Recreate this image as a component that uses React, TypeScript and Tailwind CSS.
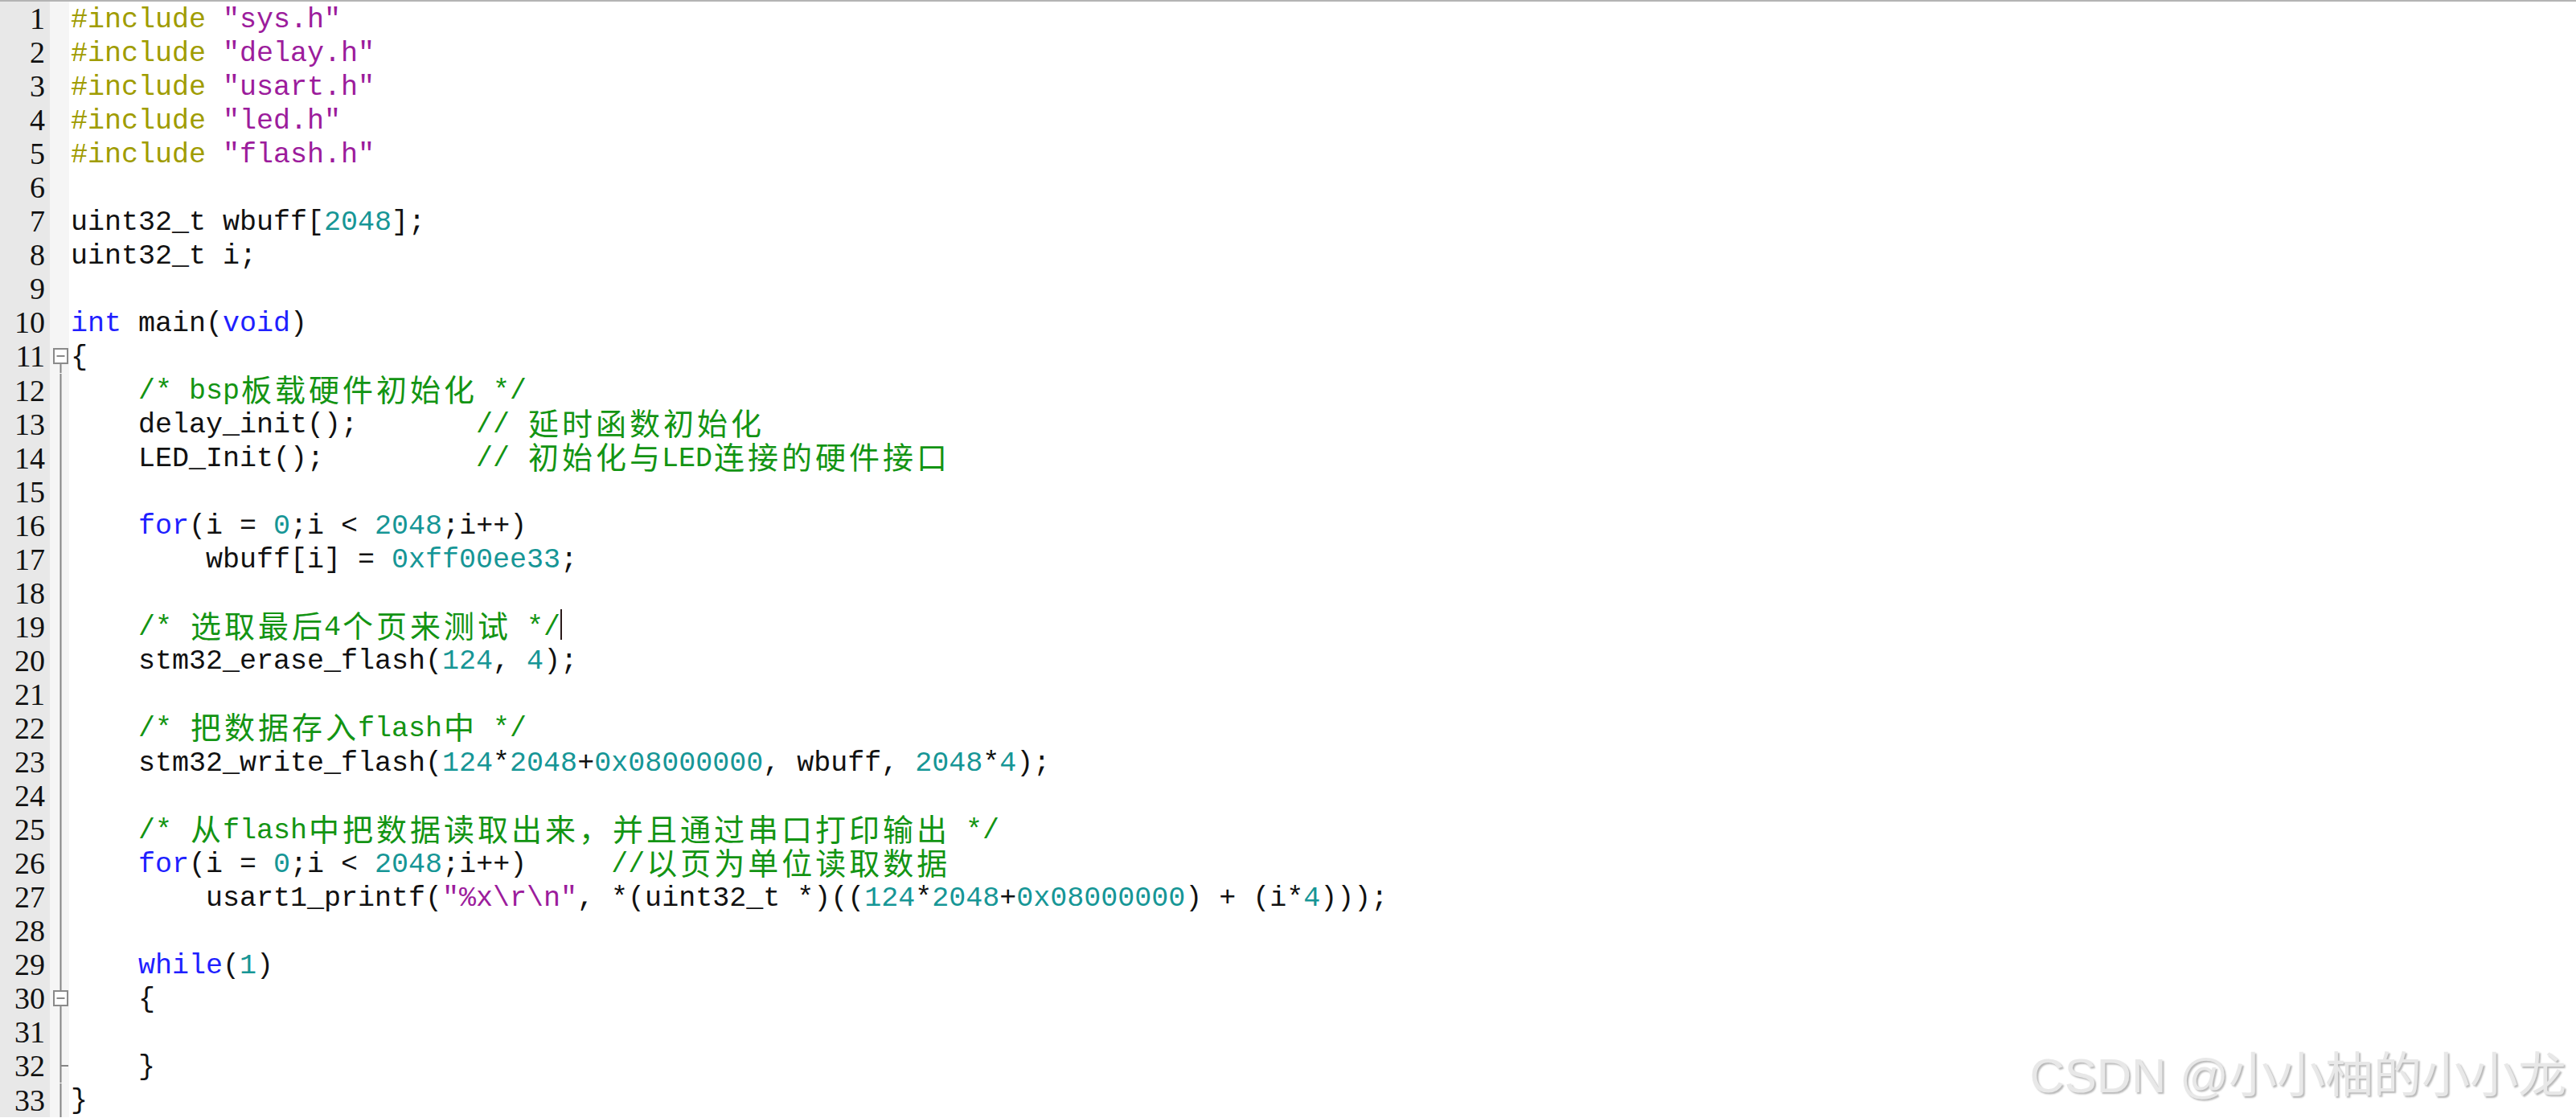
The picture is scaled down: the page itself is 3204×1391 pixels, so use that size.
import React from 'react';

type Seg = [string, string?];

const colors: Record<string, string> = {
  t: 'text-[#111111]',
  p: 'text-[#a09c00]',
  s: 'text-[#9c1c9c]',
  n: 'text-[#169696]',
  c: 'text-[#139413]',
  k: 'text-[#1f1fff]',
};

const code: Seg[][] = [
  [['#include ', 'p'], ['"sys.h"', 's']],
  [['#include ', 'p'], ['"delay.h"', 's']],
  [['#include ', 'p'], ['"usart.h"', 's']],
  [['#include ', 'p'], ['"led.h"', 's']],
  [['#include ', 'p'], ['"flash.h"', 's']],
  [],
  [['uint32_t wbuff['], ['2048', 'n'], ['];']],
  [['uint32_t i;']],
  [],
  [['int', 'k'], [' main('], ['void', 'k'], [')']],
  [['{']],
  [['    '], ['/* bsp板载硬件初始化 */', 'c']],
  [['    delay_init();       '], ['// 延时函数初始化', 'c']],
  [['    LED_Init();         '], ['// 初始化与LED连接的硬件接口', 'c']],
  [],
  [['    '], ['for', 'k'], ['(i = '], ['0', 'n'], [';i < '], ['2048', 'n'], [';i++)']],
  [['        wbuff[i] = '], ['0xff00ee33', 'n'], [';']],
  [],
  [['    '], ['/* 选取最后4个页来测试 */', 'c']],
  [['    stm32_erase_flash('], ['124', 'n'], [', '], ['4', 'n'], [');']],
  [],
  [['    '], ['/* 把数据存入flash中 */', 'c']],
  [
    ['    stm32_write_flash('], ['124', 'n'], ['*'], ['2048', 'n'], ['+'], ['0x08000000', 'n'],
    [', wbuff, '], ['2048', 'n'], ['*'], ['4', 'n'], [');'],
  ],
  [],
  [['    '], ['/* 从flash中把数据读取出来，并且通过串口打印输出 */', 'c']],
  [
    ['    '], ['for', 'k'], ['(i = '], ['0', 'n'], [';i < '], ['2048', 'n'], [';i++)     '],
    ['//以页为单位读取数据', 'c'],
  ],
  [
    ['        usart1_printf('], ['"%x\\r\\n"', 's'], [', *(uint32_t *)(('], ['124', 'n'], ['*'],
    ['2048', 'n'], ['+'], ['0x08000000', 'n'], [') + (i*'], ['4', 'n'], [')));'],
  ],
  [],
  [['    '], ['while', 'k'], ['('], ['1', 'n'], [')']],
  [['    {']],
  [],
  [['    }']],
  [['}']],
];

// fold margin marker per line number
const fold = (n: number) => {
  if (n === 11) return 'open';
  if (n === 30) return 'openMid';
  if (n === 32) return 'tick';
  if (n > 11) return 'line';
  return 'none';
};

const FoldMark = ({ kind }: { kind: string }) => {
  if (kind === 'none') return null;
  return (
    <svg className="block h-full w-[24px]" viewBox="0 0 24 42" preserveAspectRatio="none">
      {kind === 'open' && <line x1="13.5" y1="31" x2="13.5" y2="42" stroke="#858585" strokeWidth="2" />}
      {kind === 'openMid' && (
        <>
          <line x1="13.5" y1="0" x2="13.5" y2="12" stroke="#858585" strokeWidth="2" />
          <line x1="13.5" y1="31" x2="13.5" y2="42" stroke="#858585" strokeWidth="2" />
        </>
      )}
      {(kind === 'open' || kind === 'openMid') && (
        <>
          <rect x="5" y="12" width="17" height="18" fill="#ffffff" stroke="#8a8a8a" strokeWidth="2" />
          <line x1="8.5" y1="21" x2="18.5" y2="21" stroke="#8a8a8a" strokeWidth="2" />
        </>
      )}
      {(kind === 'line' || kind === 'tick') && (
        <line x1="13.5" y1="0" x2="13.5" y2="42" stroke="#858585" strokeWidth="2" />
      )}
      {kind === 'tick' && <line x1="13.5" y1="21" x2="23" y2="21" stroke="#858585" strokeWidth="2" />}
    </svg>
  );
};

const renderText = (text: string) => {
  const parts: React.ReactNode[] = [];
  let buf = '';
  [...text].forEach((ch, i) => {
    if (ch.charCodeAt(0) > 127) {
      if (buf) {
        parts.push(buf);
        buf = '';
      }
      parts.push(
        <span
          key={i}
          className="inline-block w-[42px] text-center font-['Noto_Sans_CJK_SC',sans-serif] text-[38px] leading-[24px] align-[-3px]"
        >
          {ch}
        </span>,
      );
    } else buf += ch;
  });
  if (buf) parts.push(buf);
  return parts;
};

const Row = ({ n, segs }: { n: number; segs: Seg[] }) => (
  <div className="flex h-[42.06px]">
    <div className="w-[62px] shrink-0 bg-[#e8e8e8] pr-[6px] text-right font-['Liberation_Serif',serif] text-[38px] leading-[42px] text-[#111111]">
      {n}
    </div>
    <div className="w-[24px] shrink-0 bg-[#f5f5f5]">
      <FoldMark kind={fold(n)} />
    </div>
    <div className="whitespace-pre pl-[2px] pt-[1.5px] font-['Liberation_Mono',monospace] text-[35px] leading-[42px]">
      {segs.map(([text, c], i) => (
        <span key={i} className={colors[c ?? 't']}>
          {renderText(text)}
        </span>
      ))}
      {n === 19 && <span className="-mt-[8px] inline-block h-[38px] w-[2px] bg-[#2a1a1a] align-[-6px]" />}
    </div>
  </div>
);

export default function App() {
  return (
    <div className="relative h-[1391px] w-[3204px] overflow-hidden bg-white">
      <div className="h-[2px] bg-[#b4b4b4]" />
      <div className="flex flex-col">
        {code.map((segs, i) => (
          <Row key={i} n={i + 1} segs={segs} />
        ))}
      </div>
      <div className="absolute bottom-[22px] right-[12px] font-['Liberation_Sans','Noto_Sans_CJK_SC',sans-serif] text-[60px] leading-none text-[#e8e8e8] [text-shadow:2px_2px_2px_#b8b8b8]">
        CSDN @小小柚的小小龙
      </div>
    </div>
  );
}
